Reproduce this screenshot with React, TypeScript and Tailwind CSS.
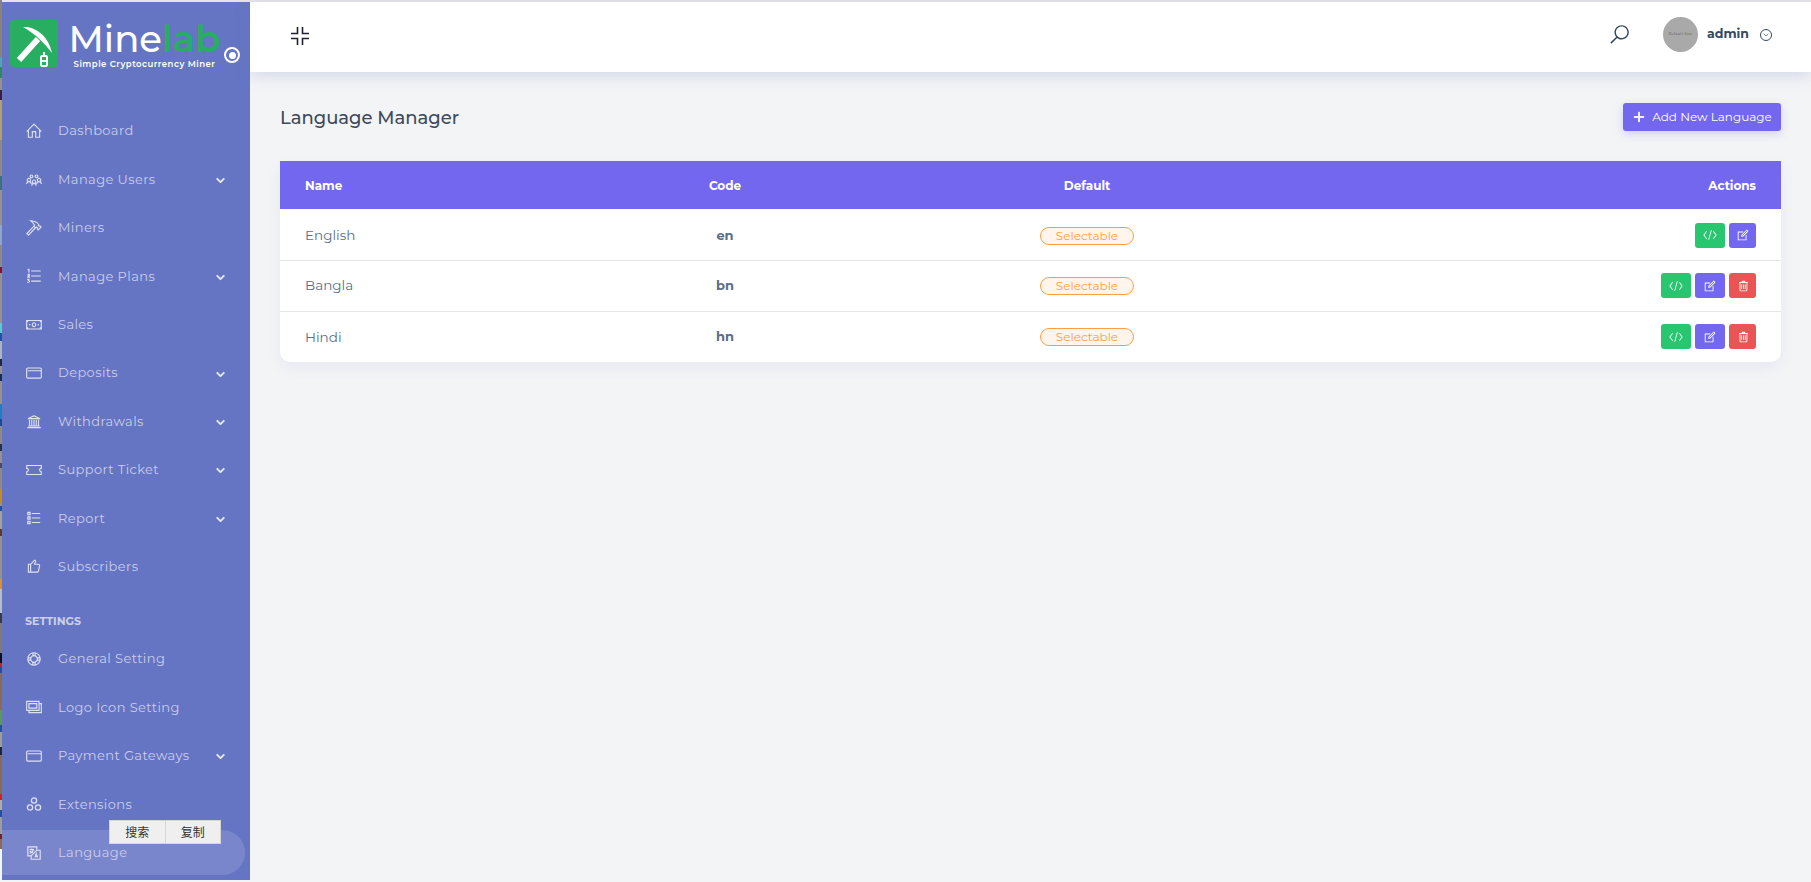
import { ChevronDown } from "lucide-react";
import {
  LiaHomeSolid,
  LiaUsersSolid,
  LiaHammerSolid,
  LiaListOlSolid,
  LiaMoneyBillSolid,
  LiaCreditCardSolid,
  LiaUniversitySolid,
  LiaTicketAltSolid,
  LiaListSolid,
  LiaThumbsUpSolid,
  LiaLifeRingSolid,
  LiaImages,
  LiaLanguageSolid,
  LiaSearchSolid,
  LiaCodeSolid,
  LiaEditSolid,
  LiaTrashAltSolid,
  LiaPlusSolid,
} from "react-icons/lia";

const font = "font-['Montserrat','Inter','Noto_Sans',sans-serif]";

// the sliver of the page behind the window, down the left edge
const edgeStrip = [
  "h-[57px] bg-[#8a8378]",
  "h-[10px] bg-[#4aa8b0]",
  "h-[11px] bg-[#2e8b57]",
  "h-[12px] bg-[#96918a]",
  "h-[10px] bg-[#3b1f38]",
  "h-[40px] bg-[#b5a06a]",
  "h-[36px] bg-[#8f8a82]",
  "h-[14px] bg-[#3f6f78]",
  "h-[35px] bg-[#96918a]",
  "h-[20px] bg-[#8fa5c9]",
  "h-[22px] bg-[#8f8a82]",
  "h-[6px] bg-[#8b1020]",
  "h-[50px] bg-[#96918a]",
  "h-[10px] bg-[#5cc8d0]",
  "h-[8px] bg-[#2050a0]",
  "h-[18px] bg-[#b0b4bc]",
  "h-[7px] bg-[#22263a]",
  "h-[8px] bg-[#96918a]",
  "h-[7px] bg-[#1d2a50]",
  "h-[23px] bg-[#96918a]",
  "h-[15px] bg-[#1c7fc0]",
  "h-[7px] bg-[#1a4a90]",
  "h-[18px] bg-[#8f8a82]",
  "h-[7px] bg-[#2a3040]",
  "h-[12px] bg-[#96918a]",
  "h-[5px] bg-[#4b4b55]",
  "h-[21px] bg-[#8f8a82]",
  "h-[14px] bg-[#c88a20]",
  "h-[3px] bg-[#96918a]",
  "h-[5px] bg-[#2050a0]",
  "h-[18px] bg-[#a5a29c]",
  "h-[7px] bg-[#5a3a20]",
  "h-[43px] bg-[#96918a]",
  "h-[10px] bg-[#d89030]",
  "h-[24px] bg-[#b8bcc4]",
  "h-[10px] bg-[#3a3a44]",
  "h-[30px] bg-[#7f7a72]",
  "h-[10px] bg-[#0a1020]",
  "h-[4px] bg-[#c02030]",
  "h-[6px] bg-[#2050a0]",
  "h-[37px] bg-[#8a6a50]",
  "h-[15px] bg-[#5a9a50]",
  "h-[7px] bg-[#2050a0]",
  "h-[15px] bg-[#a09c96]",
  "h-[8px] bg-[#20242c]",
  "h-[39px] bg-[#8a6a50]",
  "h-[6px] bg-[#d02020]",
  "h-[10px] bg-[#b0aca6]",
  "h-[7px] bg-[#2050a0]",
  "h-[17px] bg-[#a09c96]",
  "h-[5px] bg-[#7a2020]",
  "h-[10px] bg-[#8a6a50]",
];

const ExtensionsIcon = (props: { className?: string }) => (
  <svg viewBox="0 0 18 18" className={props.className} fill="none" stroke="currentColor" strokeWidth="1.3">
    <circle cx="9" cy="5.5" r="2.6" />
    <circle cx="5" cy="12.5" r="2.6" />
    <circle cx="13" cy="12.5" r="2.6" />
  </svg>
);

const mainMenu = [
  { label: "Dashboard", icon: LiaHomeSolid },
  { label: "Manage Users", icon: LiaUsersSolid, arrow: true },
  { label: "Miners", icon: LiaHammerSolid },
  { label: "Manage Plans", icon: LiaListOlSolid, arrow: true },
  { label: "Sales", icon: LiaMoneyBillSolid },
  { label: "Deposits", icon: LiaCreditCardSolid, arrow: true },
  { label: "Withdrawals", icon: LiaUniversitySolid, arrow: true },
  { label: "Support Ticket", icon: LiaTicketAltSolid, arrow: true },
  { label: "Report", icon: LiaListSolid, arrow: true },
  { label: "Subscribers", icon: LiaThumbsUpSolid },
];

const settingsMenu = [
  { label: "General Setting", icon: LiaLifeRingSolid },
  { label: "Logo Icon Setting", icon: LiaImages },
  { label: "Payment Gateways", icon: LiaCreditCardSolid, arrow: true },
  { label: "Extensions", icon: ExtensionsIcon },
  { label: "Language", icon: LiaLanguageSolid, active: true },
];

const languages = [
  { name: "English", code: "en", canDelete: false },
  { name: "Bangla", code: "bn", canDelete: true },
  { name: "Hindi", code: "hn", canDelete: true },
];

const MenuItem = (props: { label: string; icon: any; arrow?: boolean; active?: boolean }) => {
  const Icon = props.icon;
  return (
    <div className={`flex h-[48.4px] items-center pl-[23px] pr-[23px] ${props.active ? "relative" : ""}`}>
      {props.active && <div className="absolute inset-y-[2px] left-0 right-[5px] rounded-r-full bg-[#7a86cc]" />}
      <Icon className="relative h-[18px] w-[18px] text-[#dfe2f3]" />
      <span className="relative ml-[15px] flex-1 text-[13px] tracking-[0.4px] text-[#c9cde9]">{props.label}</span>
      {props.arrow && <ChevronDown className="mt-[2px] h-[13px] w-[13px] text-[#e6e8f5]" strokeWidth={3.5} />}
    </div>
  );
};

const Logo = () => (
  <div className="flex h-[72px] items-start pl-[8px] pt-[18px]">
    <div className="flex h-[47px] w-[48px] shrink-0 items-center justify-center rounded-[4px] bg-[#27ae60]">
      <svg viewBox="0 0 48 47" className="h-[47px] w-[48px]">
        <path d="M13 7C26 6 39 17 42 33C35 24 27 15 13 7Z" fill="#fff" />
        <path d="M9 40L28 19" stroke="#fff" strokeWidth="6" />
        <path d="M30 37l1-2h2v-3h2v3h2l1 2v8l-1 2h-2v3h-2v-3h-2l-1-2Z" fill="#fff" />
        <path d="M32 37h4v3h-4ZM32 42h4v3h-4Z" fill="#27ae60" />
      </svg>
    </div>
    <div className="ml-[14px] flex w-[145px] shrink-0 flex-col items-center whitespace-nowrap">
      <div className="-mt-[2px] text-[37px] font-medium leading-[42px] text-white">
        Mine<span className="font-semibold text-[#27ae60]">lab</span>
      </div>
      <div className="mt-[-1px] text-[8.5px] font-semibold leading-[11px] tracking-[0.5px] text-white">
        Simple Cryptocurrency Miner
      </div>
    </div>
    <div className="ml-[7px] mt-[27px] flex h-[16px] w-[16px] shrink-0 items-center justify-center rounded-full border-2 border-white">
      <div className="h-[7px] w-[7px] rounded-full bg-white" />
    </div>
  </div>
);

const ActionButton = (props: { color: string; wide?: boolean; icon: any }) => {
  const Icon = props.icon;
  return (
    <div className={`flex h-[25px] items-center justify-center rounded-[3px] ${props.color} ${props.wide ? "w-[30px]" : "w-[27px]"}`}>
      <Icon className="h-[14px] w-[14px] text-white" />
    </div>
  );
};

const App = () => {
  return (
    <div className={`flex h-[882px] w-[1811px] overflow-hidden bg-[#f3f4f6] ${font}`}>
      <div className="flex h-[882px] w-[2px] shrink-0 flex-col overflow-hidden">
        {edgeStrip.map((segment, index) => (
          <div key={index} className={`shrink-0 ${segment}`} />
        ))}
      </div>

      <div className="flex min-w-0 flex-1 border-t-2 border-[#e5e5e5]">
        {/* sidebar */}
        <aside className="h-[878px] w-[248px] shrink-0 bg-[#6575c4]">
          <Logo />
          <nav className="pt-[33px]">
            {mainMenu.map((item) => (
              <MenuItem key={item.label} {...item} />
            ))}
            <div className="mt-[21px] pb-[5px] pl-[23px] text-[11px] font-bold leading-[18px] text-[#ccd0ea]">SETTINGS</div>
            {settingsMenu.map((item) => (
              <MenuItem key={item.label} {...item} />
            ))}
          </nav>
        </aside>

        <div className="min-w-0 flex-1">
          {/* topbar */}
          <header className="flex h-[70px] items-center justify-between bg-white pb-[2px] pl-[41px] pr-[39px] shadow-[0_4px_14px_rgba(101,117,196,0.22)]">
            <svg viewBox="0 0 18 18" className="h-[18px] w-[18px] text-[#1f2430]" fill="none" stroke="currentColor" strokeWidth="1.6">
              <path d="M6.5 0v6.5H0M11.5 0v6.5H18M0 11.5h6.5V18M18 11.5h-6.5V18" />
            </svg>
            <div className="-mt-[3px] flex items-center">
              <LiaSearchSolid className="h-[23px] w-[23px] text-[#34495e]" />
              <div className="ml-[32px] flex h-[35px] w-[35px] items-center justify-center overflow-hidden rounded-full bg-[#a9a9a9]">
                <span className="whitespace-nowrap text-[3px] tracking-[0.5px] text-[#444]">Default Size</span>
              </div>
              <span className="ml-[9px] text-[12.5px] font-bold text-[#34495e]">admin</span>
              <div className="ml-[11px] flex h-[12px] w-[12px] items-center justify-center rounded-full border border-[#34495e]">
                <ChevronDown className="h-[8px] w-[8px] text-[#34495e]" strokeWidth={2} />
              </div>
            </div>
          </header>

          <main className="pl-[30px] pr-[30px]">
            <div className="flex h-[59px] items-end justify-between">
              <h1 className="translate-y-[1px] text-[18px] font-medium leading-[28px] text-[#3d4a5c]">Language Manager</h1>
              <button className="flex h-[28px] w-[158px] items-center justify-center rounded-[3px] bg-[#7367f0] text-[12px] text-white shadow-[0_3px_8px_rgba(115,103,240,0.25)]">
                <LiaPlusSolid className="mr-[6px] h-[14px] w-[14px] stroke-[2px]" />
                Add New Language
              </button>
            </div>

            {/* language table */}
            <div className="mt-[30px] overflow-hidden rounded-b-[10px] bg-white shadow-[0_6px_14px_rgba(101,117,196,0.08)]">
              <table className="w-full table-fixed text-[13px]">
                <thead>
                  <tr className="h-[48px] bg-[#7367f0] text-[12px] text-white">
                    <th className="w-[340px] pl-[25px] pt-[2px] text-left font-bold">Name</th>
                    <th className="w-[210px] pt-[2px] text-center font-bold">Code</th>
                    <th className="w-[514px] pt-[2px] text-center font-bold">Default</th>
                    <th className="pr-[25px] pt-[2px] text-right font-bold">Actions</th>
                  </tr>
                </thead>
                <tbody>
                  {languages.map((lang, index) => (
                    <tr
                      key={lang.code}
                      className={`h-[51px] ${index < languages.length - 1 ? "border-b border-[#e5e5e5]" : ""} ${index === 0 ? "[&>td]:pt-[2px]" : ""}`}
                    >
                      <td className="pl-[25px] text-[13.5px] text-[#5b6e88]">{lang.name}</td>
                      <td className="text-center font-bold text-[#5b6e88]">{lang.code}</td>
                      <td className="text-center">
                        <span className="inline-block h-[18px] w-[94px] rounded-full border border-[#ff9f43] bg-[#fff5ec] text-[12px] leading-[15px] text-[#ff9f43]">
                          Selectable
                        </span>
                      </td>
                      <td className="pr-[25px]">
                        <div className="flex justify-end gap-[4px]">
                          <ActionButton color="bg-[#28c76f]" wide icon={LiaCodeSolid} />
                          <ActionButton color="bg-[#7367f0]" wide={lang.canDelete} icon={LiaEditSolid} />
                          {lang.canDelete && <ActionButton color="bg-[#ea5455]" icon={LiaTrashAltSolid} />}
                        </div>
                      </td>
                    </tr>
                  ))}
                </tbody>
              </table>
            </div>
          </main>
        </div>
      </div>

      {/* browser selection popup */}
      <div className="absolute left-[109px] top-[820px] flex h-[24px] w-[112px] border border-[#d6d6d6] bg-[#efefef] font-['Noto_Sans_CJK_SC',sans-serif] text-[12px] text-[#333]">
        <div className="flex flex-1 items-center justify-center border-r border-[#d6d6d6]">搜索</div>
        <div className="flex flex-1 items-center justify-center">复制</div>
      </div>
    </div>
  );
};

export default App;
